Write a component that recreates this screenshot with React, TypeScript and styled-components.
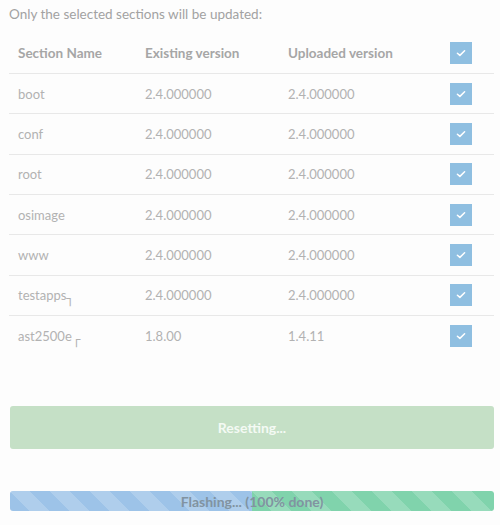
import React from "react";
import styled, { createGlobalStyle } from "styled-components";

const Global = createGlobalStyle`
  html, body { margin: 0; padding: 0; background: #fdfdfd; }
  body { font-family: Lato, "Open Sans", sans-serif; }
`;

const Page = styled.div`
  width: 500px;
  height: 525px;
  box-sizing: border-box;
  padding: 5px 6px 0 9px;
  display: flex;
  flex-direction: column;
`;

const Intro = styled.div`
  font-size: 13.5px;
  color: #a2a2a2;
  line-height: 18px;
  height: 28px;
`;

const Table = styled.div`
  display: flex;
  flex-direction: column;
`;

const Row = styled.div<{ $head?: boolean }>`
  display: grid;
  grid-template-columns: 127px 143px 162px 1fr;
  align-items: center;
  height: ${(p) => (p.$head ? "40px" : "39.33px")};
  padding-left: 9px;
  border-top: ${(p) => (p.$head ? "none" : "1px solid #e8e8e8")};
  font-size: ${(p) => (p.$head ? "13.5px" : "13px")};
  color: ${(p) => (p.$head ? "#a6a6a6" : "#b2b2b2")};
  font-weight: ${(p) => (p.$head ? 700 : 400)};
`;

const Cell = styled.div`
  white-space: nowrap;
`;

const Mark = styled.span<{ $gap?: number }>`
  font-family: "DejaVu Sans", sans-serif;
  font-size: 13px;
  line-height: 1;
  position: relative;
  top: 3px;
  margin-left: ${(p) => p.$gap ?? 0}px;
`;

const Check = styled.div`
  width: 22px;
  height: 22px;
  background: #8fbfe1;
  display: flex;
  align-items: center;
  justify-content: center;
`;

const ResetButton = styled.div`
  margin: 51px 0 0 1px;
  height: 43px;
  border-radius: 3px;
  background: #c5e0c6;
  color: #f4faf4;
  font-weight: 700;
  font-size: 14px;
  display: flex;
  align-items: center;
  justify-content: center;
`;

const Progress = styled.div`
  position: relative;
  margin: 42px 0 0 1px;
  height: 20px;
  border-radius: 3px;
  overflow: hidden;
  display: flex;
`;

const Bar = styled.div<{ $color: string }>`
  height: 100%;
  background-color: ${(p) => p.$color};
  background-image: linear-gradient(
    45deg,
    rgba(255, 255, 255, 0.18) 25%,
    transparent 25%,
    transparent 50%,
    rgba(255, 255, 255, 0.18) 50%,
    rgba(255, 255, 255, 0.18) 75%,
    transparent 75%,
    transparent
  );
  background-size: 40px 40px;
`;

const ProgressLabel = styled.div`
  position: absolute;
  inset: 0;
  display: flex;
  align-items: center;
  justify-content: center;
  font-size: 14px;
  font-weight: 700;
  color: #8193a1;
`;

const CheckIcon = () => (
  <svg width="10" height="8" viewBox="0 0 10 8">
    <path d="M1.4 4.2 L3.9 6.4 L8.6 1.7" fill="none" stroke="#ffffff" strokeWidth="1.5" strokeLinecap="round" strokeLinejoin="round" />
  </svg>
);

const rows: { name: React.ReactNode; existing: string; uploaded: string }[] = [
  { name: "boot", existing: "2.4.000000", uploaded: "2.4.000000" },
  { name: "conf", existing: "2.4.000000", uploaded: "2.4.000000" },
  { name: "root", existing: "2.4.000000", uploaded: "2.4.000000" },
  { name: "osimage", existing: "2.4.000000", uploaded: "2.4.000000" },
  { name: "www", existing: "2.4.000000", uploaded: "2.4.000000" },
  { name: <>testapps<Mark>┐</Mark></>, existing: "2.4.000000", uploaded: "2.4.000000" },
  { name: <>ast2500e<Mark $gap={1}>┌</Mark></>, existing: "1.8.00", uploaded: "1.4.11" },
];

export default function App() {
  return (
    <>
      <Global />
      <Page>
        <Intro>Only the selected sections will be updated:</Intro>
        <Table>
          <Row $head>
            <Cell>Section Name</Cell>
            <Cell>Existing version</Cell>
            <Cell>Uploaded version</Cell>
            <Check><CheckIcon /></Check>
          </Row>
          {rows.map((r, i) => (
            <Row key={i}>
              <Cell>{r.name}</Cell>
              <Cell>{r.existing}</Cell>
              <Cell>{r.uploaded}</Cell>
              <Check><CheckIcon /></Check>
            </Row>
          ))}
        </Table>
        <ResetButton>Resetting...</ResetButton>
        <Progress>
          <Bar $color="#9dc3e8" style={{ width: "50%" }} />
          <Bar $color="#80d3ac" style={{ width: "50%" }} />
          <ProgressLabel>Flashing... (100% done)</ProgressLabel>
        </Progress>
      </Page>
    </>
  );
}
